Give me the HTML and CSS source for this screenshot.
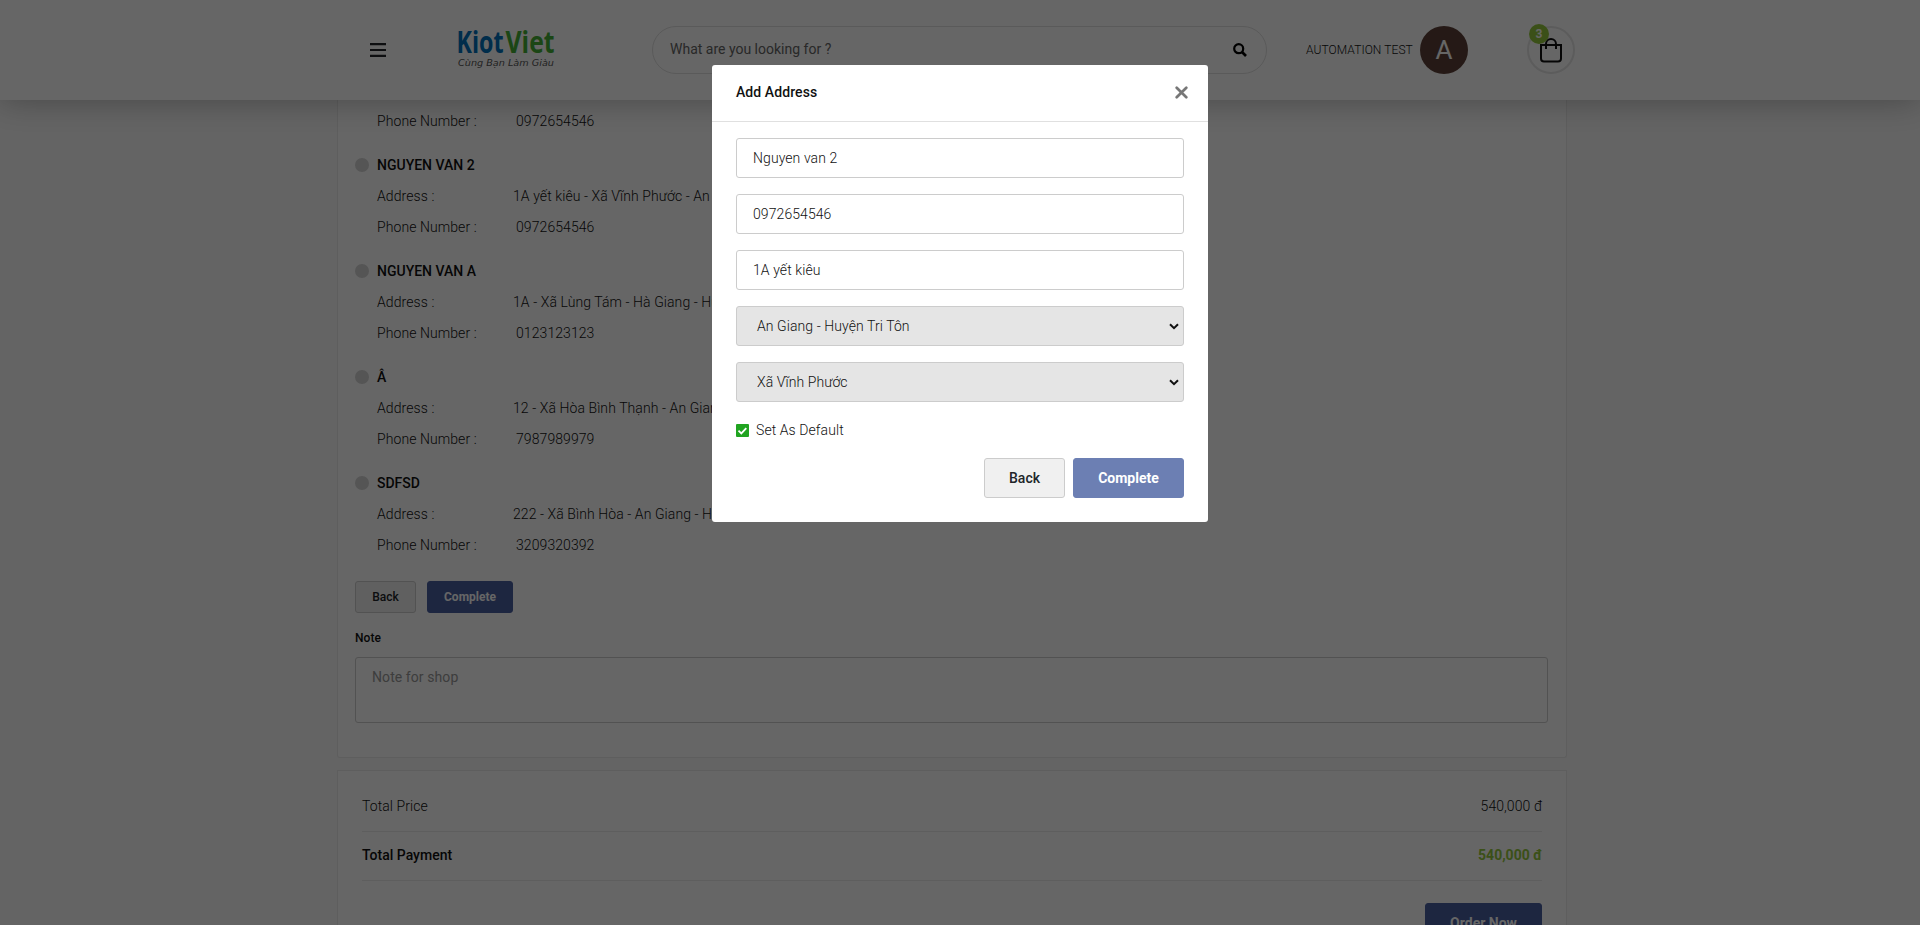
FILE: index.html
```html
<!DOCTYPE html>
<html lang="vi">
<head>
<meta charset="utf-8">
<title>KiotViet</title>
<link rel="stylesheet" href="styles.css">
</head>
<body>
<header class="header">
  <svg class="menu-icon" width="16" height="14" viewBox="0 0 16 14"><path d="M0 1.2h16M0 7h16M0 12.8h16" stroke="#212529" stroke-width="2.2"/></svg>
  <svg class="logo" width="98" height="42" viewBox="0 0 98 42">
    <text class="logo-name logo-kiot" x="-1.500" y="24" textLength="47" lengthAdjust="spacingAndGlyphs">Kiot</text>
    <text class="logo-name logo-viet" x="47.500" y="24" textLength="49" lengthAdjust="spacingAndGlyphs">Viet</text>
    <text class="logo-tag" x="0" y="37" textLength="96" lengthAdjust="spacingAndGlyphs">Cùng Bạn Làm Giàu</text>
  </svg>
  <div class="search">
    <span>What are you looking for ?</span>
    <svg width="14" height="14" viewBox="0 0 14 14" fill="none" stroke="#000"><circle cx="5.700" cy="5.700" r="4.500" stroke-width="2.200"/><path d="M9 9l4 4" stroke-width="2.700"/></svg>
  </div>
  <span class="user-name">AUTOMATION TEST</span>
  <span class="avatar">A</span>
  <div class="cart">
    <svg width="22" height="26" viewBox="0 0 22 26" fill="none" stroke="#111" stroke-width="2"><path d="M1 8h20v13.500a3 3 0 0 1-3 3H4a3 3 0 0 1-3-3zM6 12V7a5 5 0 0 1 10 0v5"/></svg>
    <span class="badge">3</span>
  </div>
</header>

<main class="content">
  <section class="card card-address">
    <div class="group">
      <div class="row"><span class="label">Phone Number :</span><span class="phone">0972654546</span></div>
    </div>
    <div class="group">
      <div class="row name"><i class="radio"></i>NGUYEN VAN 2</div>
      <div class="row"><span class="label">Address :</span><span>1A yết kiêu - Xã Vĩnh Phước - An Giang - Huyện Tri Tôn</span></div>
      <div class="row"><span class="label">Phone Number :</span><span class="phone">0972654546</span></div>
    </div>
    <div class="group">
      <div class="row name"><i class="radio"></i>NGUYEN VAN A</div>
      <div class="row"><span class="label">Address :</span><span>1A - Xã Lùng Tám - Hà Giang - Huyện</span></div>
      <div class="row"><span class="label">Phone Number :</span><span class="phone">0123123123</span></div>
    </div>
    <div class="group">
      <div class="row name"><i class="radio"></i>Â</div>
      <div class="row"><span class="label">Address :</span><span>12 - Xã Hòa Bình Thạnh - An Giang</span></div>
      <div class="row"><span class="label">Phone Number :</span><span class="phone">7987989979</span></div>
    </div>
    <div class="group">
      <div class="row name"><i class="radio"></i>SDFSD</div>
      <div class="row"><span class="label">Address :</span><span>222 - Xã Bình Hòa - An Giang - Huyện</span></div>
      <div class="row"><span class="label">Phone Number :</span><span class="phone">3209320392</span></div>
    </div>
    <div class="actions">
      <button class="btn btn-sm btn-back">Back</button>
      <button class="btn btn-sm btn-main btn-sm-wide">Complete</button>
    </div>
    <div class="note-label">Note</div>
    <div class="note-box">Note for shop</div>
  </section>

  <section class="card card-total">
    <div class="total"><span>Total Price</span><span>540,000 đ</span></div>
    <div class="total total-strong"><span>Total Payment</span><span class="amount">540,000 đ</span></div>
    <button class="btn btn-main btn-order">Order Now</button>
  </section>
</main>

<div class="overlay">
  <div class="modal">
    <div class="modal-head">
      <span>Add Address</span>
      <svg width="13" height="13" viewBox="0 0 13 13"><path d="M1.700 1.700l9.600 9.600M11.300 1.700l-9.600 9.600" stroke="#777" stroke-width="2.700" stroke-linecap="round"/></svg>
    </div>
    <div class="modal-body">
      <div class="field">Nguyen van 2</div>
      <div class="field">0972654546</div>
      <div class="field">1A yết kiêu</div>
      <div class="field select"><span>An Giang - Huyện Tri Tôn</span><svg width="10" height="7" viewBox="0 0 10 7"><path d="M1 1.200l4 4 4-4" fill="none" stroke="#111" stroke-width="2"/></svg></div>
      <div class="field select"><span>Xã Vĩnh Phước</span><svg width="10" height="7" viewBox="0 0 10 7"><path d="M1 1.200l4 4 4-4" fill="none" stroke="#111" stroke-width="2"/></svg></div>
      <div class="check">
        <svg width="13" height="13" viewBox="0 0 13 13"><rect width="13" height="13" rx="1" fill="#20a420"/><path d="M2.500 6.700l2.800 2.700 5-5.300" fill="none" stroke="#fff" stroke-width="1.800"/></svg>
        <span>Set As Default</span>
      </div>
      <div class="modal-actions">
        <button class="btn btn-back btn-modal-back">Back</button>
        <button class="btn btn-main btn-light btn-modal-ok">Complete</button>
      </div>
    </div>
  </div>
</div>
</body>
</html>
```
FILE: styles.css
```css
* { box-sizing: border-box; }
body {
  margin: 0;
  height: 925px;
  overflow: hidden;
  background: #fafafa;
  color: #111;
  font: 300 14px/21px Roboto, "Noto Sans", sans-serif;
  letter-spacing: .08px;
}
.header {
  position: relative;
  z-index: 1;
  display: flex;
  align-items: center;
  height: 100px;
  padding-left: 370px;
  background: #fff;
  box-shadow: 0 0 32px rgba(0, 0, 0, .3);
}
.logo { margin-left: 72px; overflow: visible; letter-spacing: 0; }
.logo-name { font: 700 29.5px "Open Sans", sans-serif; }
.logo-kiot { fill: #0072bc; }
.logo-viet { fill: #45b035; }
.logo-tag { font: italic 400 9px "DejaVu Sans", sans-serif; fill: #555; }
.search {
  display: flex;
  align-items: center;
  justify-content: space-between;
  width: 615px;
  height: 48px;
  margin-left: 96px;
  padding: 0 19px 1px 17px;
  border: 1px solid #e0e0e0;
  border-radius: 24px;
  color: #666;
  font-weight: 400;
  letter-spacing: 0;
}
.user-name { width: 106px; margin-left: 39px; font-size: 12px; white-space: nowrap; }
.avatar {
  width: 48px;
  height: 48px;
  margin-left: 8px;
  border-radius: 50%;
  background: #5d4037;
  color: #fff;
  font: 400 26px/49px Roboto, sans-serif;
  text-align: center;
}
.cart {
  position: relative;
  display: flex;
  justify-content: center;
  width: 48px;
  height: 48px;
  margin-left: 59px;
  padding-top: 9px;
  border: 2px solid #e6e6e6;
  border-radius: 50%;
}
.badge {
  position: absolute;
  top: -4px;
  left: 0;
  width: 20px;
  height: 20px;
  border-radius: 50%;
  background: #94c83d;
  color: #fff;
  font: 700 12px/20px Roboto, sans-serif;
  text-align: center;
}
.content { width: 1230px; margin-left: 337px; }
.card { background: #fff; border: 1px solid #ebebeb; }
.card-address { height: 658px; padding: 5px 18px 0 17px; border-top: 0; border-radius: 0 0 3px 3px; }
.group + .group { margin-top: 13px; }
.row { display: flex; align-items: center; height: 31px; padding: 2px 0 0 22px; white-space: nowrap; }
.row.name { padding: 1px 0 0; font-weight: 500; letter-spacing: 0; }
.label { width: 136px; }
.phone { padding-left: 3px; }
.radio { width: 14px; height: 14px; margin: -1px 8px 0 0; border-radius: 50%; background: #d4d4d4; }
.actions { display: flex; gap: 11px; margin-top: 21px; }
.btn {
  height: 40px;
  padding: 0;
  border: 1px solid #ccc;
  border-radius: 3px;
  font: 500 14px/20px Roboto, sans-serif;
  color: #212529;
  text-align: center;
}
.btn-back { background: #f0f0f0; }
.btn-main { border-color: #4a60a1; background: #4a60a1; color: #fff; font-weight: 700; }
.btn-sm { width: 61px; height: 32px; font-size: 12px; }
.btn-sm-wide { width: 86px; }
.note-label { margin-top: 15px; font-size: 12px; font-weight: 500; }
.note-box {
  height: 66px;
  margin-top: 8px;
  padding: 9px 16px;
  border: 1px solid #ccc;
  border-radius: 3px;
  color: #999;
  font-weight: 400;
}
.card-total { display: flex; flex-direction: column; height: 200px; margin-top: 12px; padding: 12px 24px 0; }
.total { display: flex; align-items: center; justify-content: space-between; height: 49px; padding-bottom: 2px; border-bottom: 1px solid #ebebeb; }
.total-strong { font-weight: 500; letter-spacing: 0; }
.amount { color: #94c83d; font-weight: 700; }
.btn-order { align-self: flex-end; width: 117px; margin-top: 22px; }
.overlay { position: fixed; inset: 0; z-index: 2; background: rgba(0, 0, 0, .6); }
.modal { width: 496px; height: 457px; margin: 65px auto 0; border-radius: 3px; background: #fff; }
.modal-head {
  display: flex;
  align-items: center;
  justify-content: space-between;
  height: 57px;
  padding: 0 20px 2px 24px;
  border-bottom: 1px solid #e0e0e0;
  font-weight: 500;
}
.modal-body { display: flex; flex-direction: column; gap: 16px; padding: 16px 24px; }
.field {
  display: flex;
  align-items: center;
  height: 40px;
  padding: 0 4px 0 16px;
  border: 1px solid #ccc;
  border-radius: 3px;
}
.select { justify-content: space-between; padding-left: 20px; background: #e5e5e5; }
.check { display: flex; align-items: center; gap: 7px; height: 24px; }
.modal-actions { display: flex; justify-content: flex-end; gap: 8px; }
.btn-modal-back { width: 81px; }
.btn-modal-ok { width: 111px; }
.btn-light { border-color: #6c7fb3; background: #6c7fb3; }
```
